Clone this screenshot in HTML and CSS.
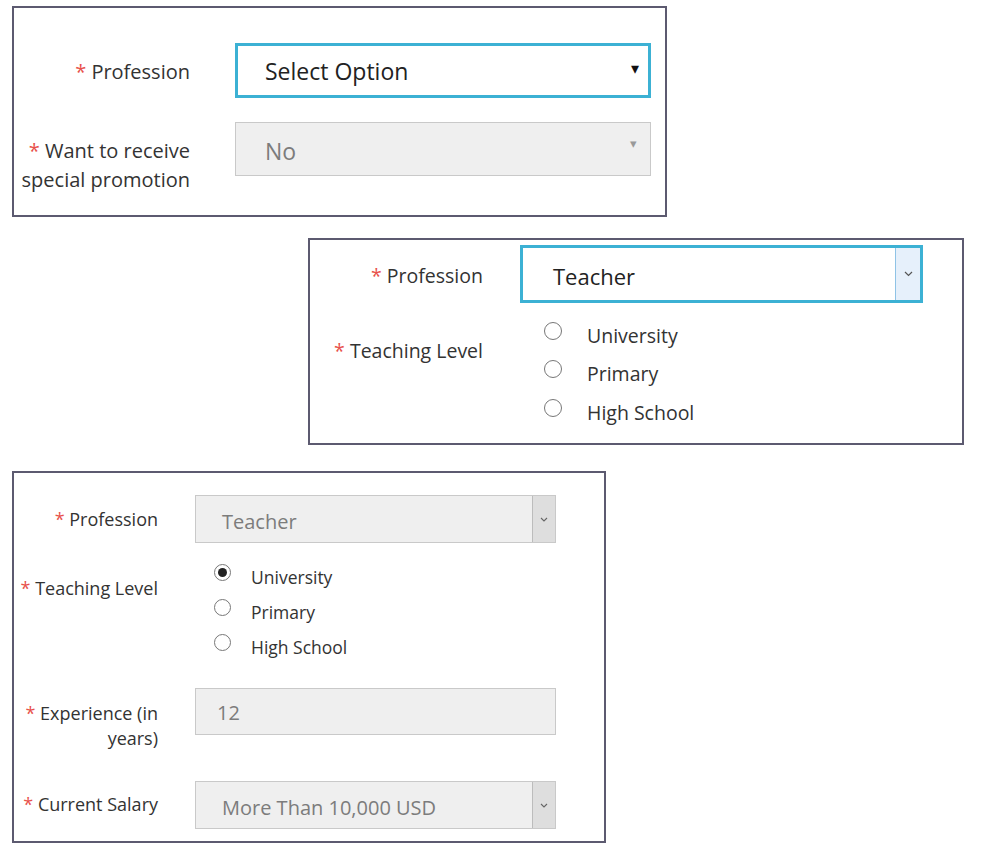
FILE: index.html
```html
<!DOCTYPE html>
<html>
	<head>
		<meta charset="utf-8" />
		<title>Profession form</title>
		<link rel="stylesheet" href="styles.css">
	</head>
	<body>
		<!-- step 1: nothing chosen yet -->
		<div class="panel panel1">
			<div class="row">
				<label class="lbl"><span class="req">*</span> Profession</label>
				<div class="sel focus">
					<span class="val">Select Option</span>
					<span class="caret">&#9662;</span>
				</div>
			</div>
			<div class="row row-promo">
				<label class="lbl"><span class="req">*</span> Want to receive<br>special promotion</label>
				<div class="sel off">
					<span class="val">No</span>
					<span class="caret">&#9662;</span>
				</div>
			</div>
		</div>

		<!-- step 2: teacher picked, level still open -->
		<div class="panel panel2">
			<div class="row">
				<label class="lbl"><span class="req">*</span> Profession</label>
				<div class="sel focus">
					<span class="val">Teacher</span>
					<span class="btn">
						<svg width="9" height="6" viewBox="0 0 9 6"><polyline points="1,1 4.5,4.5 8,1" fill="none" stroke="#555" stroke-width="1.2"/></svg>
					</span>
				</div>
			</div>
			<div class="row row-level">
				<label class="lbl"><span class="req">*</span> Teaching Level</label>
				<ul class="radios">
					<li><span class="dot"></span>University</li>
					<li><span class="dot"></span>Primary</li>
					<li><span class="dot"></span>High School</li>
				</ul>
			</div>
		</div>

		<!-- step 3: all filled, read only -->
		<div class="panel panel3">
			<div class="row">
				<label class="lbl"><span class="req">*</span> Profession</label>
				<div class="sel off">
					<span class="val">Teacher</span>
					<span class="btn">
						<svg width="8" height="5" viewBox="0 0 8 5"><polyline points="1,1 4,4 7,1" fill="none" stroke="#666" stroke-width="1.1"/></svg>
					</span>
				</div>
			</div>
			<div class="row row-level">
				<label class="lbl"><span class="req">*</span> Teaching Level</label>
				<ul class="radios">
					<li><span class="dot on"></span>University</li>
					<li><span class="dot"></span>Primary</li>
					<li><span class="dot"></span>High School</li>
				</ul>
			</div>
			<div class="row row-exp">
				<label class="lbl"><span class="req">*</span> Experience (in<br>years)</label>
				<div class="sel off input">
					<span class="val">12</span>
				</div>
			</div>
			<div class="row row-salary">
				<label class="lbl"><span class="req">*</span> Current Salary</label>
				<div class="sel off">
					<span class="val">More Than 10,000 USD</span>
					<span class="btn">
						<svg width="8" height="5" viewBox="0 0 8 5"><polyline points="1,1 4,4 7,1" fill="none" stroke="#666" stroke-width="1.1"/></svg>
					</span>
				</div>
			</div>
		</div>
	</body>
</html>
```

FILE: styles.css
```css
*{
	margin: 0;
	padding: 0;
	box-sizing: border-box;
}
ul li{
	list-style: none;
}
body{
	background: #fff;
	font-family: "Open Sans", "Liberation Sans", sans-serif;
	color: #333;
}
.panel{
	border: 2px solid #5c5a70;
	background: #fff;
}
.row{
	display: flex;
	align-items: flex-start;
}
.lbl{
	flex: none;
	text-align: right;
	color: #333;
}
.req{
	color: #e8514b;
}
.sel{
	flex: none;
	display: flex;
	align-items: center;
	position: relative;
	background: #fff;
}
.sel .val{
	flex: 1;
}
.sel.focus{
	border: 3px solid #3cb1d4;
	color: #222;
}
.sel.off{
	border: 1px solid #c9c9c9;
	background: #efefef;
	color: #7c7c7c;
}
.caret{
	font-size: 16px;
	line-height: 1;
}
.btn{
	align-self: stretch;
	display: flex;
	align-items: center;
	justify-content: center;
}
.radios li{
	display: flex;
	align-items: center;
	color: #333;
}
.dot{
	display: inline-block;
	flex: none;
	border: 1px solid #777;
	border-radius: 50%;
	background: #fff;
	position: relative;
}
.dot.on::after{
	content: "";
	position: absolute;
	left: 3px;
	top: 3px;
	right: 3px;
	bottom: 3px;
	border-radius: 50%;
	background: #222;
}

/* first panel */
.panel1{
	width: 655px;
	height: 211px;
	margin: 6px 0 0 12px;
	padding: 35px 0 0 6px;
}
.panel1 .lbl{
	width: 170px;
	margin-right: 45px;
	font-size: 20px;
	line-height: 29px;
	padding-top: 14px;
}
.panel1 .sel{
	width: 416px;
	height: 55px;
	font-size: 23px;
	padding: 0 9px 0 27px;
}
.panel1 .sel.off{
	height: 54px;
	padding-left: 29px;
	padding-right: 13px;
	padding-top: 3px;
}
.panel1 .sel.off .caret{
	font-size: 13px;
	color: #999;
	margin-top: -14px;
}
.panel1 .sel.focus .caret{
	margin-top: -6px;
	color: #111;
}
.panel1 .row-promo{
	margin-top: 24px;
}
.panel1 .row-promo .lbl{
	padding-top: 14px;
	margin-left: -6px;
	width: 176px;
}

/* second panel */
.panel2{
	width: 656px;
	height: 207px;
	margin: 21px 0 0 308px;
	padding: 5px 0 0 0;
}
.panel2 .lbl{
	width: 173px;
	margin-right: 37px;
	font-size: 19.5px;
	line-height: 28px;
	padding-top: 17px;
}
.panel2 .sel{
	width: 403px;
	height: 58px;
	font-size: 22px;
	padding-left: 30px;
	padding-top: 3px;
}
.panel2 .btn{
	width: 25px;
	margin-top: -3px;
	background: #e6f0fb;
	border-left: 1px solid #8fc3e6;
}
.panel2 .row-level{
	margin-top: 13px;
}
.panel2 .row-level .lbl{
	padding-top: 21px;
}
.panel2 .radios{
	padding-left: 24px;
}
.panel2 .radios li{
	height: 38.5px;
	font-size: 19.5px;
}
.panel2 .dot{
	width: 18px;
	height: 18px;
	margin: -9px 25px 0 0;
}

/* third panel */
.panel3{
	width: 594px;
	height: 372px;
	margin: 26px 0 0 12px;
	padding: 22px 0 0 4px;
}
.panel3 .lbl{
	width: 140px;
	margin-right: 37px;
	font-size: 18px;
	line-height: 25px;
	padding-top: 12px;
}
.panel3 .sel{
	width: 361px;
	height: 48px;
	font-size: 20px;
	padding-left: 26px;
	padding-top: 4px;
}
.panel3 .btn{
	width: 23px;
	margin-top: -4px;
	background: #dedede;
	border-left: 1px solid #bcbcbc;
}
.panel3 .row-level{
	margin-top: 16px;
}
.panel3 .row-level .lbl{
	padding-top: 17px;
}
.panel3 .radios{
	padding-left: 19px;
}
.panel3 .radios li{
	height: 35px;
	font-size: 17.5px;
}
.panel3 .dot{
	width: 17px;
	height: 17px;
	margin: -8px 20px 0 0;
}
.panel3 .row-exp{
	margin-top: 24px;
}
.panel3 .row-exp .lbl{
	padding-top: 13px;
}
.panel3 .sel.input{
	height: 47px;
	padding-left: 21px;
	padding-top: 2px;
}
.panel3 .row-salary{
	margin-top: 30px;
}
.panel3 .row-salary .lbl{
	padding-top: 11px;
}
```
